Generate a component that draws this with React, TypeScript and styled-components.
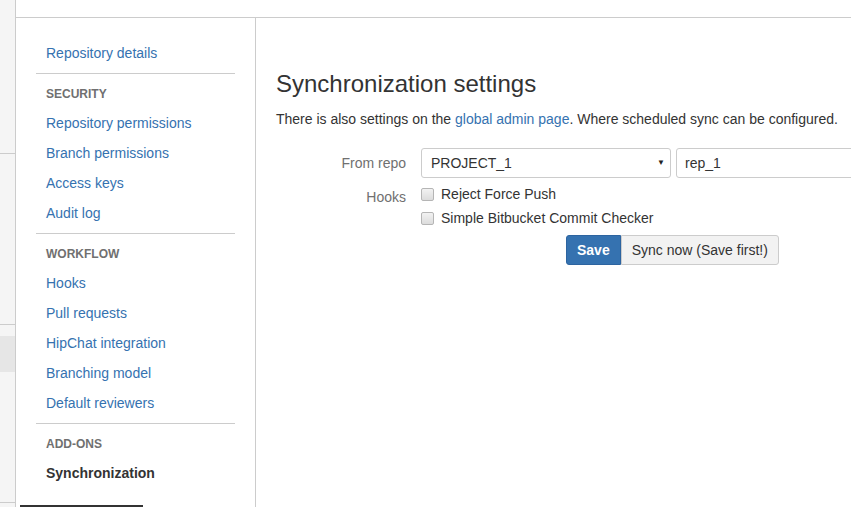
import React from 'react';
import styled, { createGlobalStyle } from 'styled-components';

const GlobalStyle = createGlobalStyle`
  html, body {
    margin: 0;
    padding: 0;
    background: #fff;
    overflow: hidden;
  }
  body {
    font-family: "Liberation Sans", Arial, sans-serif;
    font-size: 14px;
    color: #333;
  }
`;

type NavEntry =
  | { kind: 'link'; label: string; active?: boolean }
  | { kind: 'header'; label: string }
  | { kind: 'divider' };

const nav: NavEntry[] = [
  { kind: 'link', label: 'Repository details' },
  { kind: 'divider' },
  { kind: 'header', label: 'Security' },
  { kind: 'link', label: 'Repository permissions' },
  { kind: 'link', label: 'Branch permissions' },
  { kind: 'link', label: 'Access keys' },
  { kind: 'link', label: 'Audit log' },
  { kind: 'divider' },
  { kind: 'header', label: 'Workflow' },
  { kind: 'link', label: 'Hooks' },
  { kind: 'link', label: 'Pull requests' },
  { kind: 'link', label: 'HipChat integration' },
  { kind: 'link', label: 'Branching model' },
  { kind: 'link', label: 'Default reviewers' },
  { kind: 'divider' },
  { kind: 'header', label: 'Add-ons' },
  { kind: 'link', label: 'Synchronization', active: true },
];

const hooks = ['Reject Force Push', 'Simple Bitbucket Commit Checker'];

const App = () => {
  return (
    <Page>
      <GlobalStyle />
      <Strip>
        <StripBlock $h={153} />
        <StripBlock $h={170} />
        <StripBlock $h={11} $plain />
        <StripBlock $h={36} $shade $plain />
        <StripBlock $h={130} />
        <StripBlock $h={7} $plain />
      </Strip>
      <Column>
        <TopBar />
        <Body>
          <Sidebar>
            {nav.map((item, i) => {
              if (item.kind === 'divider') return <Divider key={i} />;
              if (item.kind === 'header') return <NavHeader key={i}>{item.label}</NavHeader>;
              return (
                <NavLink key={i} $active={item.active}>
                  {item.label}
                </NavLink>
              );
            })}
            <BottomBar />
          </Sidebar>
          <Main>
            <Title>Synchronization settings</Title>
            <Intro>
              There is also settings on the <Link>global admin page</Link>. Where scheduled sync can be
              configured.
            </Intro>
            <Form>
              <FieldRow>
                <Label>From repo</Label>
                <Select>
                  <span>PROJECT_1</span>
                  <Caret>▼</Caret>
                </Select>
                <TextInput>rep_1</TextInput>
              </FieldRow>
              <FieldRow $top>
                <Label $pad>Hooks</Label>
                <CheckList>
                  {hooks.map((h) => (
                    <CheckItem key={h}>
                      <Box />
                      {h}
                    </CheckItem>
                  ))}
                </CheckList>
              </FieldRow>
              <Buttons>
                <PrimaryButton>Save</PrimaryButton>
                <Button>Sync now (Save first!)</Button>
              </Buttons>
            </Form>
          </Main>
        </Body>
      </Column>
    </Page>
  );
};

export default App;

const Page = styled.div`
  display: flex;
  width: 851px;
  height: 507px;
  overflow: hidden;
`;

const Strip = styled.div`
  width: 15px;
  flex-shrink: 0;
  background: #f5f5f5;
  border-right: 1px solid #ccc;
  display: flex;
  flex-direction: column;
`;

const StripBlock = styled.div<{ $h: number; $shade?: boolean; $plain?: boolean }>`
  height: ${(p) => p.$h}px;
  flex-shrink: 0;
  background: ${(p) => (p.$shade ? '#e6e6e6' : 'transparent')};
  border-bottom: ${(p) => (p.$plain ? 'none' : '1px solid #ccc')};
`;

const Column = styled.div`
  flex: 1;
  display: flex;
  flex-direction: column;
  min-width: 0;
`;

const TopBar = styled.div`
  height: 17px;
  flex-shrink: 0;
  border-bottom: 1px solid #ccc;
`;

const Body = styled.div`
  flex: 1;
  display: flex;
  min-height: 0;
`;

const Sidebar = styled.nav`
  width: 240px;
  flex-shrink: 0;
  border-right: 1px solid #ccc;
  padding: 20px 20px 0;
  box-sizing: border-box;
  display: flex;
  flex-direction: column;
`;

const NavLink = styled.a<{ $active?: boolean }>`
  display: block;
  padding: 5px 10px;
  line-height: 20px;
  font-size: 14px;
  color: ${(p) => (p.$active ? '#333' : '#3572b0')};
  font-weight: ${(p) => (p.$active ? 'bold' : 'normal')};
  cursor: pointer;
`;

const NavHeader = styled.div`
  padding: 6px 10px 4px;
  line-height: 20px;
  font-size: 12px;
  font-weight: bold;
  text-transform: uppercase;
  color: #707070;
`;

const Divider = styled.hr`
  border: none;
  border-top: 1px solid #ccc;
  margin: 5px 0 4px;
  height: 0;
  flex-shrink: 0;
`;

const BottomBar = styled.div`
  margin: 17px 0 0 -16px;
  width: 123px;
  height: 3px;
  background: #333;
  flex-shrink: 0;
`;

const Main = styled.main`
  flex: 1;
  padding: 0 20px;
  min-width: 0;
  white-space: nowrap;
`;

const Title = styled.h2`
  margin: 51px 0 0;
  font-size: 24px;
  font-weight: normal;
  line-height: 30px;
  color: #333;
`;

const Intro = styled.p`
  margin: 10px 0 0;
  line-height: 20px;
`;

const Link = styled.a`
  color: #3572b0;
  cursor: pointer;
`;

const Form = styled.form`
  margin-top: 19px;
  display: flex;
  flex-direction: column;
`;

const FieldRow = styled.div<{ $top?: boolean }>`
  display: flex;
  align-items: ${(p) => (p.$top ? 'flex-start' : 'center')};
  margin-top: ${(p) => (p.$top ? '6px' : '0')};
`;

const Label = styled.label<{ $pad?: boolean }>`
  width: 130px;
  margin-right: 15px;
  text-align: right;
  color: #707070;
  line-height: 20px;
  padding-top: ${(p) => (p.$pad ? '3px' : '0')};
  flex-shrink: 0;
`;

const Select = styled.div`
  width: 250px;
  height: 30px;
  box-sizing: border-box;
  border: 1px solid #ccc;
  border-radius: 3px;
  padding: 0 5px 0 9px;
  display: flex;
  align-items: center;
  justify-content: space-between;
  color: #333;
  flex-shrink: 0;
`;

const Caret = styled.span`
  font-size: 8px;
  color: #222;
  margin-top: -2px;
`;

const TextInput = styled.div`
  margin-left: 5px;
  width: 250px;
  height: 30px;
  box-sizing: border-box;
  border: 1px solid #ccc;
  border-radius: 3px;
  padding: 0 8px;
  display: flex;
  align-items: center;
  flex-shrink: 0;
`;

const CheckList = styled.div`
  display: flex;
  flex-direction: column;
  gap: 4px;
`;

const CheckItem = styled.label`
  display: flex;
  align-items: center;
  line-height: 20px;
`;

const Box = styled.span`
  width: 11px;
  height: 11px;
  border: 1px solid #b5b5b5;
  border-radius: 2px;
  background: linear-gradient(#f2f2f2, #dcdcdc);
  margin-right: 7px;
  flex-shrink: 0;
`;

const Buttons = styled.div`
  display: flex;
  margin: 7px 0 0 290px;
`;

const Button = styled.button`
  height: 30px;
  box-sizing: border-box;
  padding: 0 10px;
  font-family: inherit;
  font-size: 14px;
  color: #333;
  background: #f2f2f2;
  border: 1px solid #ccc;
  border-radius: 0 3px 3px 0;
  cursor: pointer;
`;

const PrimaryButton = styled(Button)`
  color: #fff;
  font-weight: bold;
  background: #3572b0;
  border-color: #2d64a0;
  border-radius: 3px 0 0 3px;
`;
